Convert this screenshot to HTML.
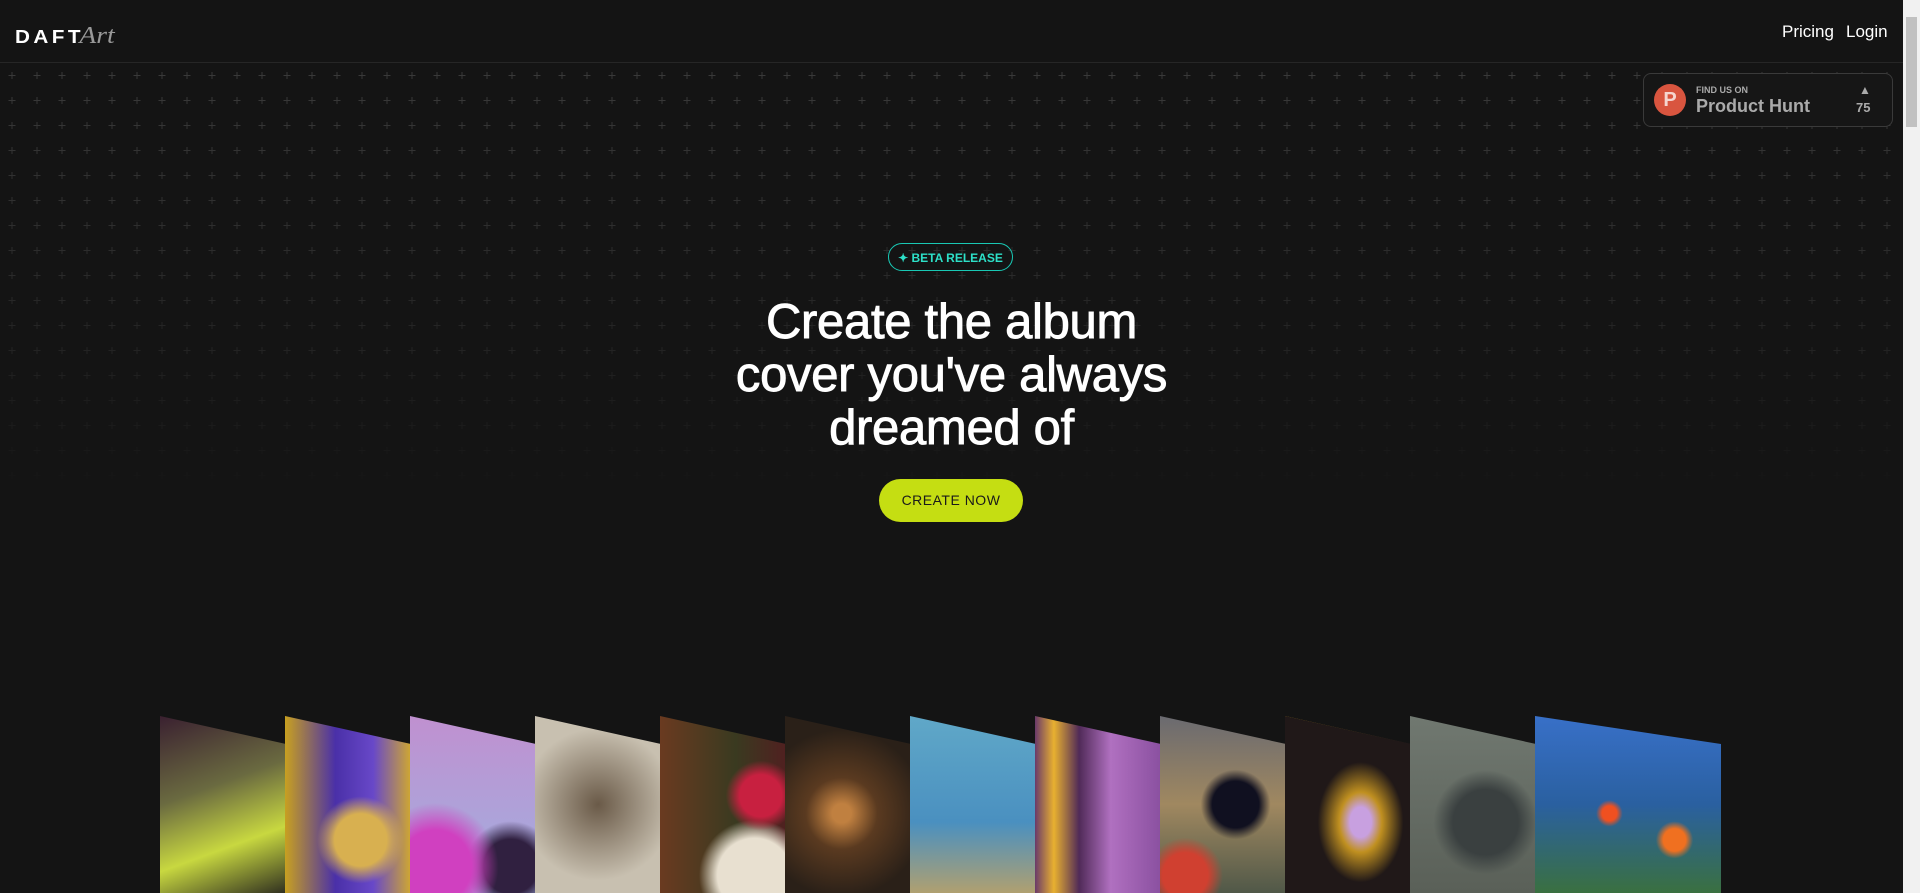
<!DOCTYPE html>
<html><head><meta charset="utf-8"><style>
html,body{margin:0;padding:0;width:1920px;height:893px;overflow:hidden;background:#141414;font-family:"Liberation Sans",sans-serif;color:#fff}
.hdr{position:absolute;left:0;top:0;width:1903px;height:62px;border-bottom:1px solid #262626}
.logo{position:absolute;left:15px;top:23px;font-weight:700;font-size:18px;letter-spacing:3px;color:#fff;transform:scaleX(1.15);transform-origin:left}
.logo i{font-family:"Liberation Serif",serif;font-weight:400;color:#999;font-size:24px;letter-spacing:0;position:relative;top:0px;margin-left:-4px}
.nav{position:absolute;top:22px;font-size:17px;color:#fff}
.sb{position:absolute;left:1903px;top:0;width:17px;height:893px;background:#f1f1f1}
.sb div{position:absolute;left:3px;top:17px;width:11px;height:110px;background:#c1c1c1}
.grid{position:absolute;left:0;top:63px;width:1903px;height:520px}
.ph{position:absolute;left:1643px;top:73px;width:248px;height:52px;border:1px solid #3a3a3a;border-radius:8px;background:#161616}
.ph .c{position:absolute;left:10px;top:10px;width:32px;height:32px;border-radius:50%;background:#d9553f;color:#f5d5cf;font-weight:700;font-size:20px;text-align:center;line-height:32px}
.beta{position:absolute;left:888px;top:243px;width:125px;height:28px;border:1px solid #19c8b4;border-radius:15px;color:#2de0c8;font-size:12px;font-weight:700;text-align:center;line-height:28px;box-sizing:border-box}
h1{position:absolute;left:0;width:1903px;top:296px;margin:0;text-align:center;font-size:49px;line-height:53px;font-weight:400;letter-spacing:-0.3px;-webkit-text-stroke:0.9px #fff}
.btn{position:absolute;left:879px;top:479px;width:144px;height:43px;border-radius:22px;background:#c5de12;color:#1a1a1a;font-size:14px;text-align:center;line-height:43px;letter-spacing:.5px}
.t{position:absolute;top:716px;width:126px;height:177px;clip-path:polygon(0 0,100% 28px,100% 100%,0 100%)}
</style></head><body>
<svg class="grid" width="1903" height="520">
<defs>
<pattern id="p" x="0" y="0" width="25" height="25" patternUnits="userSpaceOnUse">
<path d="M12 9v7M8.5 12.5h7" stroke="#3a3a3a" stroke-width="1"/>
</pattern>
<linearGradient id="g" x1="0" y1="0" x2="0" y2="1"><stop offset="0" stop-color="#fff"/><stop offset=".4" stop-color="#fff" stop-opacity=".6"/><stop offset=".85" stop-color="#fff" stop-opacity="0"/></linearGradient>
<mask id="m"><rect width="1903" height="520" fill="url(#g)"/></mask>
</defs>
<rect width="1903" height="520" fill="url(#p)" mask="url(#m)"/>
</svg>
<div class="hdr">
<div class="logo">DAFT<i>Art</i></div>
<div class="nav" style="left:1782px">Pricing</div>
<div class="nav" style="left:1846px">Login</div>
</div>
<div class="ph"><div class="c">P</div>
<div style="position:absolute;left:52px;top:11px;font-size:9px;font-weight:700;color:#aaa">FIND US ON</div>
<div style="position:absolute;left:52px;top:22px;font-size:18px;font-weight:700;color:#aaa">Product Hunt</div>
<div style="position:absolute;left:215px;top:9px;font-size:12px;color:#aaa">▲</div>
<div style="position:absolute;left:212px;top:26px;font-size:13px;font-weight:700;color:#aaa">75</div>
</div>
<div class="beta">✦ BETA RELEASE</div>
<h1>Create the album<br>cover you've always<br>dreamed of</h1>
<div class="btn">CREATE NOW</div>
<div class="t" style="left:160px;background:linear-gradient(160deg,#3a2030,#6a6a40 40%,#c8d840 70%,#303020)"></div>
<div class="t" style="left:285px;background:radial-gradient(circle at 60% 70%,#d8b050 0 18%,transparent 30%),linear-gradient(90deg,#c8a020,#4a30a8 40%,#6848c8 70%,#d0a830)"></div>
<div class="t" style="left:410px;background:radial-gradient(circle at 20% 85%,#d040c0 0 20%,transparent 35%),radial-gradient(circle at 80% 85%,#302040 0 15%,transparent 25%),linear-gradient(180deg,#c090d0,#a0b0e0)"></div>
<div class="t" style="left:535px;background:radial-gradient(circle at 50% 50%,#6a5a48,#c8c0b0 70%)"></div>
<div class="t" style="left:660px;background:radial-gradient(circle at 80% 45%,#c82040 0 15%,transparent 25%),radial-gradient(circle at 75% 90%,#e8e0d0 0 20%,transparent 30%),linear-gradient(90deg,#6a3a20,#3a3a20 60%,#502020)"></div>
<div class="t" style="left:785px;background:radial-gradient(circle at 45% 55%,#c08040 0 8%,#5a3a20 30%,#2a2018 70%)"></div>
<div class="t" style="left:910px;background:linear-gradient(180deg,#60a8c8,#4a90c0 60%,#b0a070)"></div>
<div class="t" style="left:1035px;background:linear-gradient(90deg,#6a3a6a,#e8b030 15%,#502a58 35%,#b070c0 60%,#8a50a0)"></div>
<div class="t" style="left:1160px;background:radial-gradient(circle at 60% 50%,#101020 0 20%,transparent 30%),radial-gradient(circle at 20% 90%,#d04030 0 12%,transparent 20%),linear-gradient(180deg,#6a6a70,#a08860 50%,#505848)"></div>
<div class="t" style="left:1285px;background:radial-gradient(ellipse at 60% 60%,#c8a0e0 0 10%,#c09020 20%,#201818 40%),linear-gradient(90deg,#d0a020,#201818)"></div>
<div class="t" style="left:1410px;background:radial-gradient(circle at 60% 60%,#3a4040 0 25%,transparent 40%),linear-gradient(180deg,#707870,#5a6058)"></div>
<div class="t" style="left:1535px;width:186px;background:radial-gradient(circle at 40% 55%,#f05020 0 5%,transparent 9%),radial-gradient(circle at 75% 70%,#f07020 0 6%,transparent 10%),linear-gradient(180deg,#3870c8,#2a60a0 50%,#3a7040)"></div>
<div class="sb"><div></div></div>
</body></html>
